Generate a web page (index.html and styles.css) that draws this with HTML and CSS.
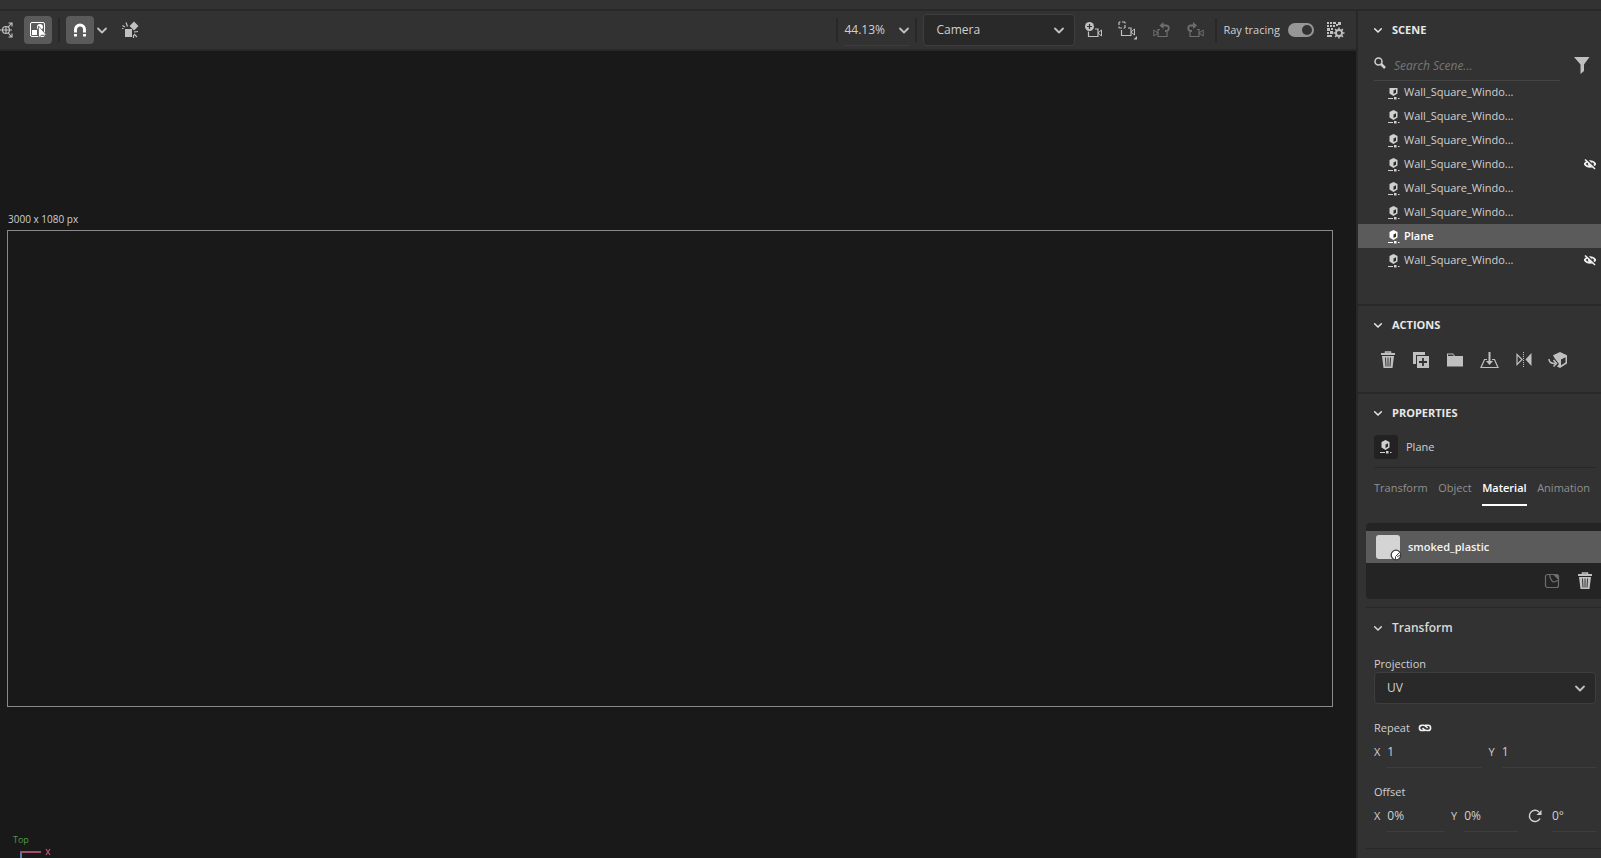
FILE: index.html
```html
<!DOCTYPE html>
<html lang="en">
<head>
<meta charset="utf-8">
<title>Scene editor</title>
<meta name="viewport" content="width=device-width, initial-scale=1">
<link rel="stylesheet" href="styles.css">
</head>
<body>
<svg class="sprite" aria-hidden="true">
  <symbol id="chevron" viewBox="0 0 12 12"><path d="M2 4.500l4 4 4-4" fill="none" stroke="currentColor" stroke-width="1.800" stroke-linecap="round" stroke-linejoin="round"/></symbol>
  <symbol id="mesh" viewBox="0 0 12 14"><path d="M5.500 0L9.500 2v5.500l-4 2.500-4-2.500V2z" fill="currentColor"/><path d="M5.500 4.500L8 3.300v3.400L5.500 8z" fill="#2c2c2c"/><path d="M0 12.500h5M10 12.500h1.500" stroke="currentColor"/><path d="M6 11h2.500v2.500H6z" fill="currentColor"/></symbol>
  <symbol id="hidden" viewBox="0 0 12 12"><path d="M.5 6C3 2.200 9 2.200 11.500 6 9 9.800 3 9.800.5 6z" fill="none" stroke="currentColor" stroke-width="1.800"/><circle cx="6" cy="6" r="2.200" fill="currentColor"/><path d="M2 .5l10 10" stroke="#323232" stroke-width="1.500"/><path d="M1 1.500l10 9.500" stroke="currentColor" stroke-width="1.600"/></symbol>
  <symbol id="trash" viewBox="0 0 16 18"><path d="M5.500 2V1h5v1" fill="none" stroke="currentColor" stroke-width="1.500"/><path d="M1 2h14v2H1zM2 5h12l-1.500 12h-9z" fill="currentColor"/><path d="M5.500 6.500l.5 9M8 6.500v9M10.500 6.500l-.5 9" stroke="#323232"/></symbol>
</svg>
<div class="app">
  <div class="top-strip"></div>
  <div class="workspace">
    <main class="stage">
      <div class="toolbar">
        <div class="tools">
          <button class="icon-button clipped" aria-label="Transform gizmo"><svg width="18" height="18" viewBox="0 0 18 18" fill="none" stroke="currentColor" stroke-width="1.200"><circle cx="11" cy="9" r="3.500"/><path d="M5 9h12M11 5.500v7M13 6.500l3.500-4.500M13.500 2H17v3.500M13 11.500l3.500 4.500M13.500 16H17v-3.500"/></svg></button>
          <button class="icon-button active" aria-label="Select by area"><svg width="18" height="18" viewBox="0 0 18 18"><rect x="1.500" y="1.500" width="14" height="14" rx="1.500" fill="none" stroke="currentColor"/><circle cx="11" cy="6" r="3" fill="currentColor"/><path d="M3 9h5v5H3z" fill="currentColor"/><path d="M9.500 5v12l2.700-2.600 5.300-.4z" fill="currentColor" stroke="#5a5a5a" stroke-width=".8"/></svg></button>
          <span class="divider"></span>
          <button class="icon-button active" aria-label="Snap"><svg width="14" height="14" viewBox="0 0 14 14"><path d="M2.500 9.500V6.500a4.500 4.500 0 0 1 9 0v3" fill="none" stroke="currentColor" stroke-width="3"/><path d="M1 11h3v2.500H1zM10 11h3v2.500h-3z" fill="currentColor"/></svg></button>
          <button class="icon-button narrow" aria-label="Snap options"><svg width="12" height="12"><use href="#chevron"/></svg></button>
          <button class="icon-button" aria-label="Physics collision"><svg width="18" height="18" viewBox="0 0 18 18"><path d="M3 8h7v8H3zM12 .5l4.500 4.500L12 9.500 7.500 5z" fill="currentColor"/><path d="M5.500 5.500L4 1.500M3 6L.5 4.500M1.500 7.500H0M12 11l4-.5M12 13l3 3M11.500 14v3" stroke="currentColor" stroke-width="1.200"/></svg></button>
        </div>
        <div class="view-controls">
          <span class="divider"></span>
          <div class="zoom-field">
            <input class="zoom-input" type="text" value="44.13%" aria-label="Zoom">
            <button class="plain-button" aria-label="Zoom presets"><svg width="12" height="12"><use href="#chevron"/></svg></button>
          </div>
          <span class="divider"></span>
          <div class="select camera-select">
            <select aria-label="Camera"><option>Camera</option></select>
            <svg width="12" height="12"><use href="#chevron"/></svg>
          </div>
          <div class="camera-tools">
            <button class="plain-button" aria-label="Add camera"><svg width="18" height="16" viewBox="0 0 18 16"><path d="M3.500 9.500v5H13V7H10" fill="none" stroke="currentColor" stroke-width="1.200"/><path d="M13 11l3.500-3v6z" fill="none" stroke="currentColor"/><circle cx="4.500" cy="4.500" r="4.500" fill="currentColor"/><path d="M4.500 2v5M2 4.500h5" stroke="#323232" stroke-width="1.200"/></svg></button>
            <button class="plain-button" aria-label="Frame selection"><svg width="20" height="20" viewBox="0 0 20 20"><path d="M3.500 10v5.500H13V8h-3" fill="none" stroke="currentColor" stroke-width="1.200"/><path d="M13 12l3.500-3v6z" fill="none" stroke="currentColor"/><rect x="1" y="2" width="6" height="6" fill="none" stroke="currentColor" stroke-width="1.200" stroke-dasharray="1.500 1.500 3 0" stroke-dashoffset="0"/><path d="M19 16v3.500h-3.500z" fill="currentColor"/></svg></button>
            <button class="plain-button" aria-label="Undo camera move" disabled><svg width="18" height="16" viewBox="0 0 18 16"><path d="M7 7.500H5v7h9V10" fill="none" stroke="currentColor" stroke-width="1.200"/><path d="M5 11L.8 8v6z" fill="none" stroke="currentColor"/><path d="M9 3.500h4.500a2.800 2.800 0 0 1 0 5.500H12" fill="none" stroke="currentColor" stroke-width="1.800"/><path d="M6.500 3.500L10.500 0v7z" fill="currentColor"/></svg></button>
            <button class="plain-button" aria-label="Redo camera move" disabled><svg width="18" height="16" viewBox="0 0 18 16"><path d="M11 7.500h2v7H4V10" fill="none" stroke="currentColor" stroke-width="1.200"/><path d="M13 11l4.200-3v6z" fill="none" stroke="currentColor"/><path d="M8 3.500H4.500a2.800 2.800 0 0 0 0 5.500H6" fill="none" stroke="currentColor" stroke-width="1.800"/><path d="M11 3.500L7 0v7z" fill="currentColor"/></svg></button>
          </div>
          <span class="divider"></span>
          <label class="switch-label">Ray tracing <input class="switch" type="checkbox" checked></label>
          <button class="plain-button render-button" aria-label="Render settings"><svg width="20" height="18" viewBox="0 0 20 18"><path d="M1 1h2v2H1zM4 1h2v2H4zM7 1h3v2H7zM12 1h3v3h-3zM1 4h2v2H1zM4 4h2v2H4zM7 4h2v2H7zM10 3h2v2h-2zM1 7h3v3H1zM5 7h2v2H5zM1 11h2v2H1zM4 10h3v3H4zM1 14h5v2H1z" fill="currentColor"/><circle cx="13" cy="12" r="3" fill="none" stroke="currentColor" stroke-width="1.800"/><path d="M13 6.500V9M13 15v2.500M7.500 12H10M16 12h2.500M9.100 8.100l1.700 1.700M15.200 14.200l1.700 1.700M9.100 15.900l1.700-1.700M15.200 9.800l1.700-1.700" stroke="currentColor" stroke-width="1.500"/></svg></button>
        </div>
      </div>
      <div class="viewport">
        <figure class="artboard">
          <figcaption>3000 x 1080 px</figcaption>
          <div class="artboard-frame"></div>
        </figure>
        <div class="axis">
          <span class="axis-name">Top</span>
          <svg width="40" height="14" viewBox="0 0 40 14"><path d="M1 5v9" stroke="#4f7fae" stroke-width="2"/><path d="M0 6h21" stroke="#a04f70" stroke-width="2"/><path d="M26 3l4 6M30 3l-4 6" stroke="#c0506c" stroke-width="1.200"/></svg>
        </div>
      </div>
    </main>
    <aside class="panel">
      <section class="section scene">
        <button class="section-title"><svg width="10" height="10"><use href="#chevron"/></svg>SCENE</button>
        <div class="search-row">
          <label class="search-field">
            <svg width="12" height="12" viewBox="0 0 12 12"><circle cx="4.500" cy="4.500" r="3.500" fill="none" stroke="currentColor" stroke-width="1.500"/><path d="M7 7l4 4" stroke="currentColor" stroke-width="2.500"/></svg>
            <input type="text" placeholder="Search Scene..." aria-label="Search scene">
          </label>
          <button class="plain-button" aria-label="Filter"><svg width="16" height="17" viewBox="0 0 16 17"><path d="M0 0h15.500L10 7.500V14l-3.500 3V7.500z" fill="currentColor"/></svg></button>
        </div>
        <ul class="scene-list">
          <li><svg class="mesh" width="12" height="14"><use href="#mesh"/></svg><span>Wall_Square_Windo...</span></li>
          <li><svg class="mesh" width="12" height="14"><use href="#mesh"/></svg><span>Wall_Square_Windo...</span></li>
          <li><svg class="mesh" width="12" height="14"><use href="#mesh"/></svg><span>Wall_Square_Windo...</span></li>
          <li><svg class="mesh" width="12" height="14"><use href="#mesh"/></svg><span>Wall_Square_Windo...</span><button class="plain-button eye" aria-label="Show"><svg width="12" height="12"><use href="#hidden"/></svg></button></li>
          <li><svg class="mesh" width="12" height="14"><use href="#mesh"/></svg><span>Wall_Square_Windo...</span></li>
          <li><svg class="mesh" width="12" height="14"><use href="#mesh"/></svg><span>Wall_Square_Windo...</span></li>
          <li class="selected"><svg class="mesh" width="12" height="14"><use href="#mesh"/></svg><span>Plane</span></li>
          <li><svg class="mesh" width="12" height="14"><use href="#mesh"/></svg><span>Wall_Square_Windo...</span><button class="plain-button eye" aria-label="Show"><svg width="12" height="12"><use href="#hidden"/></svg></button></li>
        </ul>
      </section>
      <section class="section actions">
        <button class="section-title"><svg width="10" height="10"><use href="#chevron"/></svg>ACTIONS</button>
        <div class="action-row">
          <button class="plain-button" aria-label="Delete"><svg width="16" height="18"><use href="#trash"/></svg></button>
          <button class="plain-button" aria-label="Duplicate"><svg width="18" height="18" viewBox="0 0 18 18"><path d="M1 1h12v3H4v9H1zM5 5h12v12H5z" fill="currentColor"/><path d="M11 7v8M7 11h8" stroke="#323232" stroke-width="1.800"/></svg></button>
          <button class="plain-button" aria-label="Group"><svg width="18" height="18" viewBox="0 0 18 18"><path d="M1 5V2.500h6L9 5h8v10.500H1z" fill="currentColor"/><path d="M2 5V3.500h4.500L8 5z" fill="#323232"/></svg></button>
          <button class="plain-button" aria-label="Move to ground"><svg width="20" height="18" viewBox="0 0 20 18"><path d="M7 8.500H4.500L1 16.500h17l-3.500-8H12" fill="none" stroke="currentColor" stroke-width="1.200"/><path d="M8.500 1h2v9H13l-3.500 4L6 10h2.500z" fill="currentColor"/></svg></button>
          <button class="plain-button" aria-label="Mirror"><svg width="16" height="18" viewBox="0 0 16 18"><path d="M1 3.500v10L6 8.500z" fill="none" stroke="currentColor" stroke-width="1.200"/><path d="M15.500 2v13L9.500 8.500z" fill="currentColor"/><path d="M7.500 1v16" stroke="currentColor" stroke-dasharray="1 1"/></svg></button>
          <button class="plain-button" aria-label="Replace model"><svg width="20" height="18" viewBox="0 0 20 18"><path d="M12 1l7 3.300v8.200L12 17l-3-1.500 2-2.500-4.500-6L5 4.300z" fill="currentColor"/><path d="M13 8.500l4.500-2.200v5.200L13 14.200z" fill="#323232"/><path d="M1 8c0 3.500 2 4.500 6 4.500M5.500 9l3 3.500-3 3" fill="none" stroke="currentColor" stroke-width="1.500"/></svg></button>
        </div>
      </section>
      <section class="section properties">
        <button class="section-title"><svg width="10" height="10"><use href="#chevron"/></svg>PROPERTIES</button>
        <div class="object-name"><span class="object-icon"><svg width="12" height="14"><use href="#mesh"/></svg></span>Plane</div>
        <div class="tabs" role="tablist">
          <button role="tab">Transform</button>
          <button role="tab">Object</button>
          <button role="tab" class="current" aria-selected="true">Material</button>
          <button role="tab">Animation</button>
        </div>
        <div class="material-list">
          <div class="material">
            <span class="thumb"><svg class="badge" width="12" height="12" viewBox="0 0 12 12"><circle cx="6" cy="6" r="4.800" fill="#fff" stroke="#3c3c3c" stroke-width="1.300"/><path d="M5.500 11V7.500L9.500 3.500M7 8l3-2" stroke="#444" fill="none"/></svg></span>
            smoked_plastic
          </div>
          <div class="material-tools">
            <button class="plain-button" aria-label="Add decal" disabled><svg width="16" height="16" viewBox="0 0 16 16"><rect x="1.500" y="1.500" width="13" height="13" rx="2" fill="none" stroke="currentColor" stroke-width="1.200"/><path d="M9 1.500l5.500 5.500V3.500a2 2 0 0 0-2-2z" fill="currentColor"/><path d="M5.500 2c1 4 2 7 4.500 7l4-1.500" fill="none" stroke="currentColor" stroke-width="1.200"/></svg></button>
            <button class="plain-button" aria-label="Delete material"><svg width="16" height="18"><use href="#trash"/></svg></button>
          </div>
        </div>
        <div class="group">
          <button class="section-title group-title"><svg width="10" height="10"><use href="#chevron"/></svg>Transform</button>
          <label class="field-label" for="projection">Projection</label>
          <div class="select">
            <select id="projection"><option>UV</option></select>
            <svg width="12" height="12"><use href="#chevron"/></svg>
          </div>
          <div class="field-label repeat-label">Repeat <button class="plain-button link" aria-label="Link repeat values"><svg width="14" height="10" viewBox="0 0 14 10"><path d="M7 7.500H4a2.600 2.600 0 0 1 0-5.200h1.500C7.500 2.300 8.500 4 9.500 5M7 2.300h3a2.600 2.600 0 0 1 0 5.200H8.500C6.500 7.500 5.500 6 4.500 5" fill="none" stroke="currentColor" stroke-width="1.600"/></svg></button></div>
          <div class="values">
            <label class="value">X <input type="text" value="1"></label>
            <label class="value">Y <input type="text" value="1"></label>
          </div>
          <div class="field-label">Offset</div>
          <div class="values three">
            <label class="value">X <input type="text" value="0%"></label>
            <label class="value">Y <input type="text" value="0%"></label>
            <label class="value rotation"><svg width="14" height="14" viewBox="0 0 14 14"><path d="M11 3A5.600 5.600 0 1 0 12 9.500" fill="none" stroke="currentColor" stroke-width="1.500"/><path d="M13.500 1v5h-5z" fill="currentColor"/></svg><input type="text" value="0°" aria-label="Rotation"></label>
          </div>
        </div>
        <div class="group-end"></div>
      </section>
    </aside>
  </div>
</div>
</body>
</html>
```
FILE: styles.css
```css
:root {
  --panel: #323232;
  --line: #282828;
  --text: #d0d0d0;
  --icon: #c0c0c0;
  --bright: #e8e8e8;
}

* { box-sizing: border-box; }

body {
  margin: 0;
  background: #191919;
  color: var(--text);
  font: 500 11px/16px "Open Sans", "Noto Sans", sans-serif;
}

button, input, select {
  margin: 0;
  padding: 0;
  border: 0;
  border-radius: 0;
  background: none;
  color: inherit;
  font: inherit;
  outline: none;
}

svg { display: block; flex: none; }
.sprite { position: absolute; width: 0; height: 0; }

.app {
  display: flex;
  flex-direction: column;
  height: 100vh;
  overflow: hidden;
}

.top-strip {
  flex: none;
  height: 11px;
  background: var(--panel);
  border-bottom: 2px solid var(--line);
}

.workspace { display: flex; flex: 1; min-height: 0; }
.stage { display: flex; flex: 1; flex-direction: column; min-width: 0; }

.toolbar {
  display: flex;
  flex: none;
  justify-content: space-between;
  height: 40px;
  padding-right: 10px;
  background: var(--panel);
  border-bottom: 2px solid var(--line);
}

.tools, .view-controls, .camera-tools { display: flex; align-items: center; }

.icon-button {
  display: grid;
  place-content: center;
  width: 28px;
  height: 28px;
  border-radius: 4px;
  color: var(--icon);
}

.icon-button.active { background: #5a5a5a; color: #fff; }
.icon-button.clipped { justify-content: end; width: 13px; margin-right: 11px; overflow: hidden; }
.icon-button.narrow { width: 16px; margin-right: 7px; }

.divider {
  width: 2px;
  height: 24px;
  background: var(--line);
}

.tools .divider { margin: 0 6px; }

.plain-button { display: block; color: var(--icon); }
.plain-button:disabled { color: #6e6e6e; }

.zoom-field {
  display: flex;
  align-items: center;
  justify-content: space-between;
  width: 66px;
  height: 32px;
  margin: 0 5px 0 6px;
  border-bottom: 1px solid #3c3c3c;
}

.zoom-input { width: 46px; font-size: 12px; }

.select {
  display: grid;
  align-items: center;
  height: 32px;
  background: #292929;
  border: 1px solid #3e3e3e;
  border-radius: 4px;
}

.select > * { grid-area: 1 / 1; }

.select select {
  appearance: none;
  width: 100%;
  height: 100%;
  padding: 0 30px 0 12px;
  font-size: 12px;
}

.select svg { justify-self: end; margin-right: 9px; color: var(--icon); pointer-events: none; }

.camera-select { width: 152px; margin-left: 6px; }
.camera-tools { gap: 15px; margin: 0 11px 0 10px; }
.switch-label { display: flex; align-items: center; gap: 8px; margin-left: 6px; }

.switch {
  appearance: none;
  display: flex;
  justify-content: flex-end;
  width: 26px;
  height: 14px;
  padding: 2px;
  border-radius: 7px;
  background: #969696;
}

.switch::before {
  content: "";
  width: 10px;
  height: 10px;
  border-radius: 5px;
  background: var(--panel);
}

.render-button { margin-left: 12px; }

.viewport {
  display: flex;
  flex: 1;
  flex-direction: column;
  justify-content: space-between;
  min-height: 0;
  padding: 160px 23px 0 7px;
}

.artboard { margin: 0; font-size: 10px; }
.artboard figcaption { padding: 0 0 3px 1px; }
.artboard-frame { aspect-ratio: 3000 / 1080; border: 1px solid #8a8a8a; }

.axis { padding-left: 6px; }
.axis-name { display: block; font-size: 9px; line-height: 12px; color: #4f9a4a; }
.axis svg { margin-left: 7px; }
.axis { margin-bottom: -2px; }

.panel {
  flex: none;
  width: 245px;
  background: var(--panel);
  border-left: 2px solid var(--line);
}

.section { border-bottom: 2px solid var(--line); }

.section-title {
  display: flex;
  align-items: center;
  gap: 9px;
  height: 38px;
  padding-left: 15px;
  color: var(--bright);
  font-weight: 700;
}

.search-row {
  display: flex;
  align-items: center;
  gap: 14px;
  height: 32px;
  padding: 0 11px 0 16px;
}

.search-field {
  display: flex;
  flex: 1;
  align-items: center;
  gap: 8px;
  min-width: 0;
  height: 32px;
  border-bottom: 1px solid #444;
}

.search-field svg { margin-bottom: 4px; }
.search-field input { flex: 1; min-width: 0; padding-top: 2px; font-size: 12px; }
.search-field input::placeholder { color: #777; font-style: italic; opacity: 1; }

.scene-list {
  display: flex;
  flex-direction: column;
  justify-content: flex-end;
  height: 184px;
  margin: 7px 0 32px;
  padding: 0;
  overflow: hidden;
  list-style: none;
}

.scene-list li {
  display: flex;
  flex: none;
  align-items: center;
  gap: 4px;
  height: 24px;
  padding: 0 5px 0 30px;
}

.scene-list .mesh { margin-top: 2px; }
.scene-list .selected { background: #5b5b5b; color: #fff; font-weight: 600; }
.scene-list .eye { margin-left: auto; color: #eee; }

.action-row { display: flex; align-items: flex-start; gap: 16px; height: 48px; padding: 7px 0 0 22px; }

.object-name {
  display: flex;
  align-items: center;
  gap: 8px;
  height: 36px;
  margin: 0 5px 0 16px;
  padding-bottom: 6px;
  border-bottom: 1px solid #282828;
}

.object-icon {
  display: grid;
  place-items: center;
  width: 24px;
  height: 24px;
  border-radius: 3px;
  background: #222;
}

.tabs {
  display: flex;
  justify-content: space-between;
  margin: 0 11px 17px 16px;
  color: #909090;
}

.tabs button { height: 38px; padding-top: 4px; border-bottom: 2px solid transparent; }
.tabs .current { border-color: #fff; color: #fff; font-weight: 600; }

.material-list {
  height: 76px;
  margin-left: 8px;
  padding-top: 8px;
  border-radius: 4px 0 0 4px;
  background: #242424;
}

.material {
  display: flex;
  align-items: center;
  gap: 8px;
  height: 32px;
  padding-left: 10px;
  background: #5b5b5b;
  color: #f4f4f4;
  font-weight: 600;
}

.thumb {
  position: relative;
  width: 24px;
  height: 24px;
  border-radius: 3px;
  background: #d4d4d4;
}

.badge { position: absolute; right: -2px; bottom: -2px; }

.material-tools {
  display: flex;
  align-items: center;
  justify-content: flex-end;
  gap: 17px;
  height: 36px;
  padding-right: 8px;
}

.group {
  margin: 8px 0 0 8px;
  padding: 0 5px 16px 8px;
  border-top: 1px solid var(--line);
}

.group-title { height: 40px; padding-left: 0; margin-left: -1px; font-size: 12px; font-weight: 600; color: #d8d8d8; }
.group .select { margin-bottom: 16px; }
.field-label { display: flex; align-items: center; height: 16px; }
label.field-label { margin-top: 8px; }
.link { margin-left: 8px; color: #f0f0f0; }

.values {
  display: grid;
  grid-template-columns: 1fr 1fr;
  gap: 7px;
  margin-bottom: 16px;
}

.values.three { grid-template-columns: 70px 67px 1fr; margin-bottom: 0; }
.value { display: flex; align-items: center; }

.value input {
  flex: 1;
  width: 0;
  height: 32px;
  margin-left: 7px;
  border-bottom: 1px solid #3e3e3e;
  font-size: 12px;
}

.rotation { padding-left: 3px; }
.rotation input { margin-left: 10px; }
.group-end { height: 20px; margin-left: 8px; border-top: 1px solid var(--line); }
```
